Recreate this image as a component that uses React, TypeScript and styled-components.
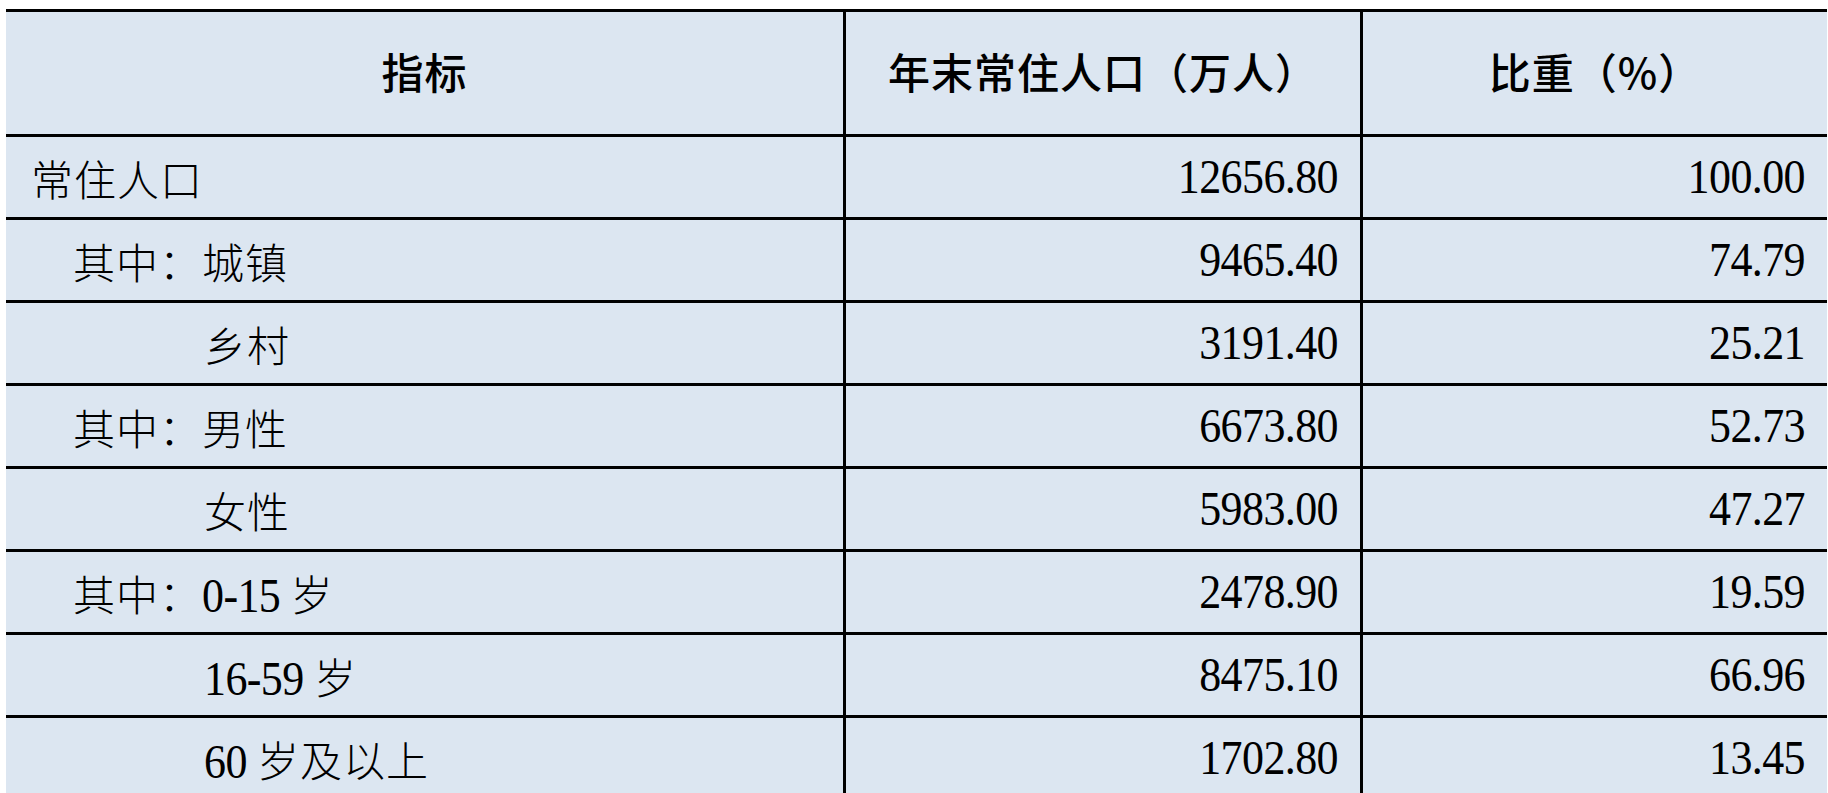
import React from 'react'
import styled, { createGlobalStyle } from 'styled-components'

const GlobalStyle = createGlobalStyle`
	html, body {
		margin: 0;
		padding: 0;
		background: #ffffff;
		overflow: hidden;
	}
`

const Page = styled.div`
	padding: 9px 1px 0 6px;
`

const Table = styled.table`
	width: 1821px;
	table-layout: fixed;
	border-collapse: separate;
	border-spacing: 0;
	background: #dce6f1;
	border-top: 3px solid #000;
	color: #000;
`

const HeadCell = styled.th`
	box-sizing: border-box;
	height: 125px;
	padding: 0 0 6px;
	border-bottom: 3px solid #000;
	border-right: 3px solid #000;
	text-align: center;
	vertical-align: middle;
	font-family: 'Noto Sans CJK SC', 'Noto Sans', sans-serif;
	font-size: 42px;
	font-weight: 500;
	letter-spacing: 1px;

	&:last-child {
		border-right: none;
	}
`

const serif = `"Liberation Serif", "Times New Roman", serif`

const Cell = styled.td<{ $indent?: number; $num?: boolean }>`
	box-sizing: border-box;
	height: 83px;
	padding: 0 ${p => (p.$num ? '22px' : '0')} 0 ${p => (p.$num ? '0' : `${p.$indent ?? 25}px`)};
	border-bottom: 3px solid #000;
	border-right: 3px solid #000;
	text-align: ${p => (p.$num ? 'right' : 'left')};
	vertical-align: middle;
	font-family: ${serif};
	font-size: 42px;
	font-weight: 400;
	letter-spacing: 1px;
	white-space: nowrap;

	&:last-child {
		border-right: none;
	}
`

// CJK part of a label, drawn lighter to come closer to the Song face
const Han = styled.span`
	font-family: 'Noto Sans CJK SC', sans-serif;
	font-weight: 300;
`

// digits: the reference uses a tall, narrow serif
const Digits = styled.span`
	display: inline-block;
	font-family: ${serif};
	font-size: 44px;
	letter-spacing: -0.6px;
	transform: scaleY(1.1);
	transform-origin: center;
`

type Row = { label: string; level: 0 | 1 | 2; value: string; share: string }

const rows: Row[] = [
	{ label: '常住人口', level: 0, value: '12656.80', share: '100.00' },
	{ label: '其中：城镇', level: 1, value: '9465.40', share: '74.79' },
	{ label: '乡村', level: 2, value: '3191.40', share: '25.21' },
	{ label: '其中：男性', level: 1, value: '6673.80', share: '52.73' },
	{ label: '女性', level: 2, value: '5983.00', share: '47.27' },
	{ label: '其中：0-15 岁', level: 1, value: '2478.90', share: '19.59' },
	{ label: '16-59 岁', level: 2, value: '8475.10', share: '66.96' },
	{ label: '60 岁及以上', level: 2, value: '1702.80', share: '13.45' },
]

const indents = [25, 67, 198]

// split a label into runs of Han characters and runs of digits
const renderLabel = (label: string) =>
	label.split(/([0-9-]+)/).map((part, i) =>
		/^[0-9-]+$/.test(part) ? <Digits key={i}>{part}</Digits> : part ? <Han key={i}>{part}</Han> : null
	)

const App = () => {
	return (
		<Page>
			<GlobalStyle />
			<Table>
				<colgroup>
					<col style={{ width: 840 }} />
					<col style={{ width: 517 }} />
					<col style={{ width: 464 }} />
				</colgroup>
				<thead>
					<tr>
						<HeadCell>指标</HeadCell>
						<HeadCell>年末常住人口（万人）</HeadCell>
						<HeadCell>比重（%）</HeadCell>
					</tr>
				</thead>
				<tbody>
					{rows.map(row => (
						<tr key={row.label}>
							<Cell $indent={indents[row.level]}>{renderLabel(row.label)}</Cell>
							<Cell $num>
								<Digits>{row.value}</Digits>
							</Cell>
							<Cell $num>
								<Digits>{row.share}</Digits>
							</Cell>
						</tr>
					))}
				</tbody>
			</Table>
		</Page>
	)
}

export default App
